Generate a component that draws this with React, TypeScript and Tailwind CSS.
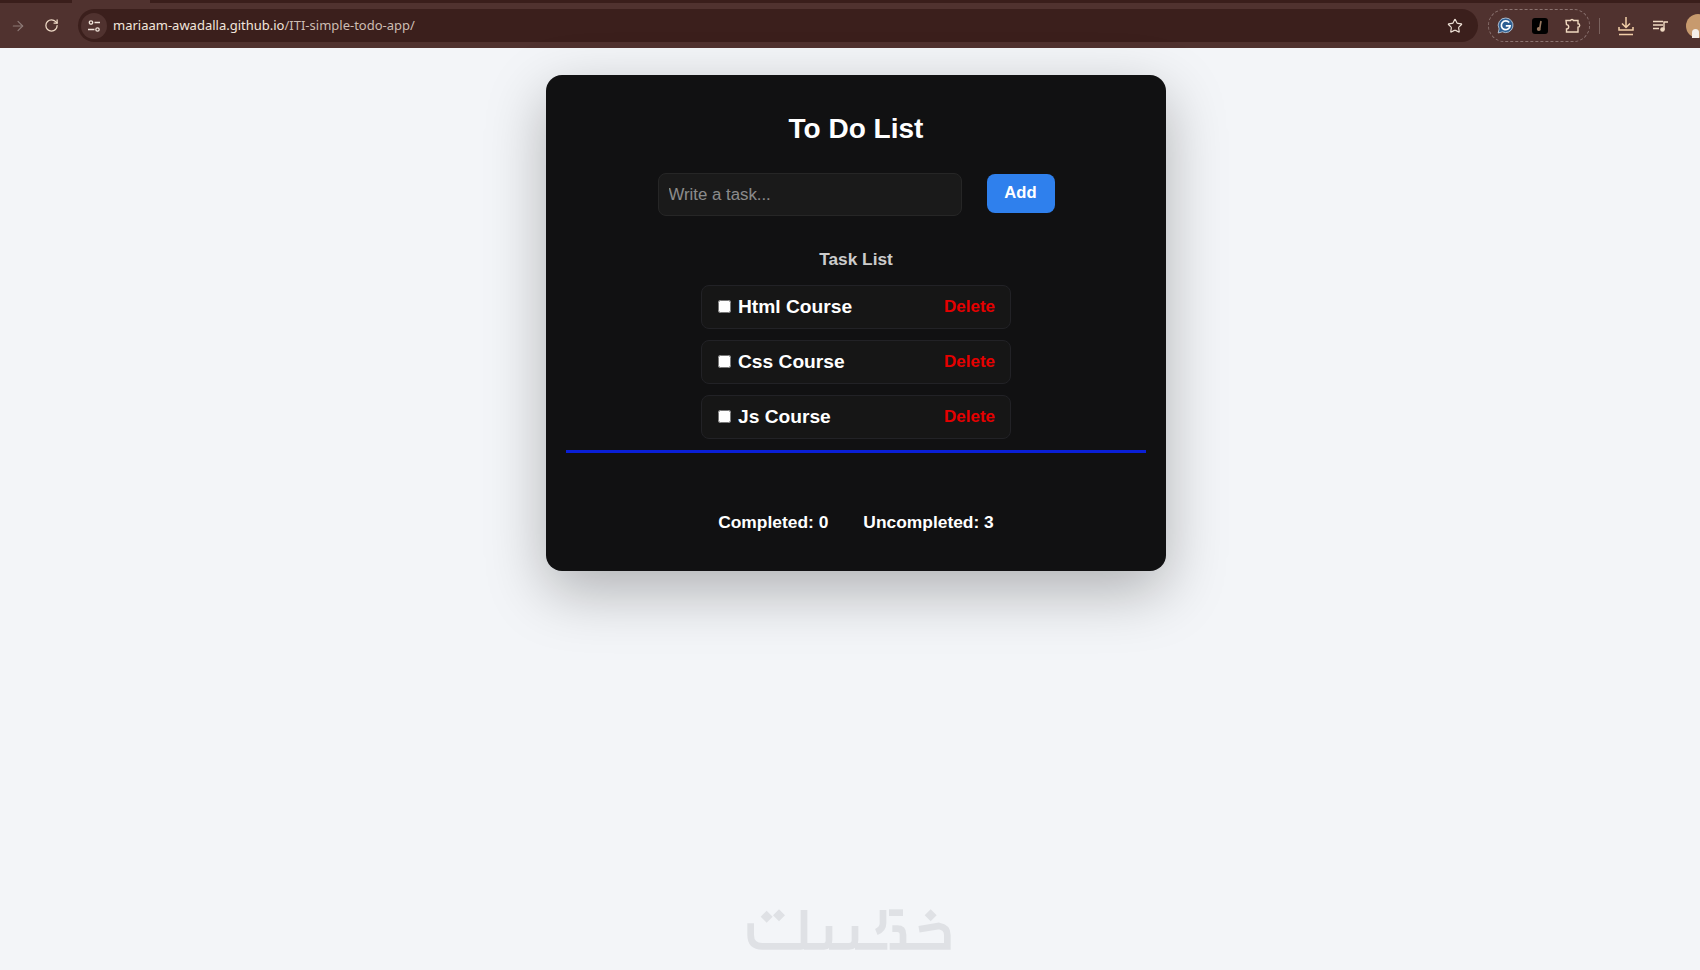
import { ArrowRight, RotateCw, Star } from "lucide-react";

const tasks = ["Html Course", "Css Course", "Js Course"];

function BrowserBar() {
  return (
    <div className="h-[48px] shrink-0 overflow-hidden bg-[#50322f] flex flex-col font-['Noto_Sans',sans-serif]">
      <div className="h-[3px] bg-[#3a1e1b] flex">
        <div className="ml-[72px] w-[78px] h-[3px] bg-[#50322f]" />
      </div>
      <div className="flex-1 flex items-center pl-[10px]">
        <ArrowRight size={16} strokeWidth={1.75} className="shrink-0 text-[#8d7a77]" />
        <RotateCw size={15} strokeWidth={2} className="shrink-0 ml-[18px] text-[#f0dcc8]" />
        <div className="ml-[19px] h-[33px] w-[1400px] shrink-0 rounded-full bg-[#3b1f1c] flex items-center pl-[3px] pr-[15px]">
          <div className="w-[26px] h-[26px] rounded-full bg-[#50322f] flex items-center justify-center">
            <svg width="14" height="14" viewBox="0 0 14 14" fill="none" stroke="#f0e4da" strokeWidth="1.3">
              <circle cx="4" cy="3.5" r="1.7" />
              <path d="M7.5 3.5H13M1 10.5h6.5" />
              <circle cx="10.5" cy="10.5" r="1.7" />
            </svg>
          </div>
          <span className="ml-[6px] text-[13px] text-[#f2e6dc]">
            mariaam-awadalla.github.io<span className="text-[#cdbdb3]">/ITI-simple-todo-app/</span>
          </span>
          <Star size={16} strokeWidth={1.75} className="ml-auto text-[#eee0d5]" />
        </div>
        <div className="ml-[10px] h-[33px] w-[102px] shrink-0 rounded-full border border-dashed border-[#8a7370] flex items-center justify-between px-[8px]">
          <svg width="17" height="17" viewBox="0 0 17 17">
            <path d="M8.8 1a7.3 7.3 0 1 1-3.4 13.8L1.2 16l.9-4.2A7.3 7.3 0 0 1 8.8 1z" fill="#2d5f93" stroke="#c9d6e2" strokeWidth=".8" />
            <path d="M12.2 5.6a4.4 4.4 0 1 0 .9 3.2H8.8" fill="none" stroke="#fff" strokeWidth="1.7" />
          </svg>
          <div className="w-[16px] h-[16px] rounded-[3px] bg-black flex items-center justify-center">
            <svg width="8" height="12" viewBox="0 0 8 12" fill="none" stroke="#9a7a62" strokeWidth="1.6">
              <path d="M5 1 3.8 8" />
              <circle cx="2.8" cy="9" r="1.2" fill="#9a7a62" />
            </svg>
          </div>
          <svg width="16" height="16" viewBox="0 0 16 16" fill="none" stroke="#f0d9c0" strokeWidth="1.4">
            <path d="M1 2.5h4.5a1.6 1.6 0 0 1 3 0H13v3.3a1.7 1.7 0 0 1 0 3.4V14H1.5v-3a2 2 0 0 0 0-4.4z" />
          </svg>
        </div>
        <div className="ml-[9px] w-px h-[16px] shrink-0 bg-[#7a625e]" />
        <svg width="16" height="20" viewBox="0 0 16 20" className="shrink-0 ml-[18px]" fill="none" stroke="#f2cfa8" strokeWidth="1.5">
          <path d="M8 1v10M4 7.5 8 11.5l4-4M1 11v3h14v-3M1 18.5h14" />
        </svg>
        <svg width="16" height="12" viewBox="0 0 16 12" className="shrink-0 ml-[19px]" fill="none" stroke="#f2dcc4" strokeWidth="1.4">
          <path d="M0 1.5h10M0 5h10M0 8.5h6M11 9.5V2h4" />
          <circle cx="9.5" cy="9.5" r="1.6" fill="#f2dcc4" />
        </svg>
        <div className="ml-[17px] w-[24px] h-[24px] shrink-0 rounded-full bg-[#c79a6e] flex items-end justify-start">
          <div className="w-[7px] h-[9px] ml-[6px] bg-[#f4efe9] rounded-t-sm" />
        </div>
      </div>
    </div>
  );
}

function TaskRow({ name }: { name: string }) {
  return (
    <div className="h-[44px] w-[310px] rounded-[8px] bg-[#161616] border border-[#222226] flex items-center justify-between pl-[16px] pr-[15px]">
      <label className="flex items-center gap-[4px] text-[19.2px] font-bold text-white">
        <input type="checkbox" className="w-[13px] h-[13px] m-[3px] ml-0" />
        {name}
      </label>
      <button className="text-[17px] font-bold text-[#e60000]">Delete</button>
    </div>
  );
}

export default function App() {
  return (
    <div className="h-[970px] overflow-hidden bg-[#f3f5f8] flex flex-col font-['Liberation_Sans',Arial,sans-serif]">
      <BrowserBar />
      <div className="flex-1 flex flex-col items-center pl-[12px]">
        <div className="mt-[27px] w-[620px] h-[496px] rounded-[16px] bg-[#111112] shadow-[0_20px_60px_rgba(0,0,0,0.28)] px-[20px] flex flex-col items-center">
          <h1 className="mt-[37px] text-[28px] leading-[34px] font-bold text-white">To Do List</h1>
          <div className="mt-[27px] flex items-start gap-[25px]">
            <input
              placeholder="Write a task..."
              className="w-[304px] h-[43px] rounded-[8px] bg-[#1a1a1a] border border-[#262626] px-[10px] text-[16.8px] text-white outline-none"
            />
            <button className="mt-[1px] w-[68px] h-[39px] rounded-[8px] bg-[#2f80ed] text-[16.6px] font-bold text-white">Add</button>
          </div>
          <h2 className="mt-[32px] text-[17.3px] leading-[22px] font-bold text-[#cccccc]">Task List</h2>
          <div className="mt-[15px] flex flex-col gap-[11px]">
            {tasks.map((t) => (
              <TaskRow key={t} name={t} />
            ))}
          </div>
          <div className="mt-[11px] w-full h-[3px] bg-[#0a1fd6]" />
          <div className="mt-[58px] flex gap-[35px] text-[17.4px] leading-[22px] font-bold text-white">
            <span>Completed: 0</span>
            <span>Uncompleted: 3</span>
          </div>
        </div>
        {/* khamsat logo watermark */}
        <svg width="230" height="80" viewBox="0 0 690 240" className="mt-auto ml-[-24px]" fill="none" stroke="#dfe1e5" strokeWidth="20">
          <path d="M65 100V135Q65 169 100 169H215Q225 169 225 159V60" />
          <path d="M225 169H285Q300 169 300 150V108M300 169H360Q378 169 378 150V108M378 169H475" />
          <path d="M462 60V100Q462 118 442 126" />
          <path d="M480 68H522" />
          <path d="M490 116H505Q522 116 522 134V178" />
          <path d="M482 169H655V135Q655 112 630 108L570 118" />
          <path d="M95 80l18-18 18 18-18 18zM132 76l18-18 18 18-18 18zM587 76l18-18 18 18-18 18z" fill="#dfe1e5" stroke="none" />
        </svg>
      </div>
    </div>
  );
}
